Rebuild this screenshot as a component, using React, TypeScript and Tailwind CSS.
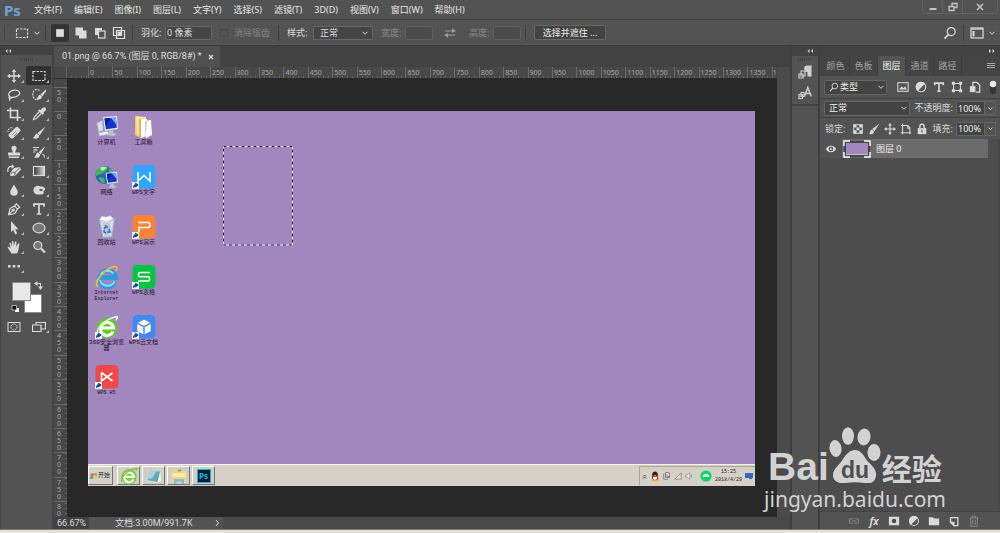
import React, { useState } from 'react';
import clsx from 'clsx';

interface IconProps {
  children: React.ReactNode;
  className?: string;
  box?: number;
}

interface Tool {
  id: string;
  label: string;
  icon: React.ReactNode;
  flyout?: boolean;
}

interface Shortcut {
  label: string;
  latin?: boolean;
  art: React.ReactNode;
}

const MENUS = ['文件(F)', '编辑(E)', '图像(I)', '图层(L)', '文字(Y)', '选择(S)', '滤镜(T)', '3D(D)', '视图(V)', '窗口(W)', '帮助(H)'];

const H_RULER = Array.from({ length: 28 }, (_, i) => i * 50);
const V_RULER = Array.from({ length: 16 }, (_, i) => i * 50);

const Icon = ({ children, className = 'size-3.5', box = 14 }: IconProps) => (
  <svg viewBox={`0 0 ${box} ${box}`} fill="none" stroke="currentColor" strokeWidth="1.2" className={clsx('shrink-0', className)} aria-hidden="true">
    {children}
  </svg>
);

const Chevron = ({ className = 'size-2' }: { className?: string }) => (
  <Icon box={8} className={className}>
    <path d="M1.5 2.8 4 5.3l2.5-2.5" strokeWidth="1" />
  </Icon>
);

const Divider = () => <span className="h-4 w-px shrink-0 bg-[#3c3c3c]" />;

const SearchIcon = ({ className }: { className?: string }) => (
  <Icon className={className}>
    <circle cx="8.2" cy="5.6" r="4" />
    <path d="M5.4 8.6 1.5 12.6" strokeWidth="1.6" />
  </Icon>
);

const TOOLS: Tool[] = [
  {
    id: 'move', label: '移动工具', flyout: true,
    icon: <><path d="M7 2v10M2 7h10" strokeWidth="1.4" /><path d="M7 0 4.8 3h4.4zM7 14l-2.2-3h4.4zM0 7l3-2.2v4.4zM14 7l-3-2.2v4.4z" fill="currentColor" stroke="none" /></>,
  },
  {
    id: 'marquee', label: '矩形选框工具', flyout: true,
    icon: <rect x="1" y="2.5" width="12" height="9" strokeDasharray="2.4 1.2" />,
  },
  {
    id: 'lasso', label: '套索工具', flyout: true,
    icon: <path d="M3.5 9C-.2 7.2 2 2.6 7.4 2.2c5-.3 6.8 3 3.8 5.3-2.2 1.6-5.6 2-7.7 1.5-1.4-.3-2 .8-1 1.4s2.2-.2 1.6-1.4M2.8 10.2c.2 1.2 0 2-.6 2.8" />,
  },
  {
    id: 'quick', label: '快速选择工具', flyout: true,
    icon: <><path d="M7.5 2.4C4-.2.4 2.5.8 6.8c.2 3.3 2.6 5.7 5.2 4.7" strokeDasharray="2 1" /><path d="m13.8 1.4-5.4 5 2 2 4-5.8z" fill="currentColor" stroke="none" /><path d="M8 6.8c-2.2.2-1.6 3-3.8 4.2 2.8 1.4 5.6.2 5.8-2.2z" fill="currentColor" stroke="none" /></>,
  },
  {
    id: 'crop', label: '裁剪工具', flyout: true,
    icon: <path d="M3.5.5v10H14M0 3.5h10.5V14" strokeWidth="1.6" />,
  },
  {
    id: 'eyedropper', label: '吸管工具', flyout: true,
    icon: <><path d="M7.5 4.5 2.2 10 1.4 12.6 4 11.8l5.4-5.3" /><path d="M6 3.6 7.8 2.2l1 .8C11-.4 12.6 0 13.4.8s1.2 2.6-2 4.4l.8 1-1.6 1.6z" fill="currentColor" stroke="none" /></>,
  },
  {
    id: 'heal', label: '污点修复画笔工具', flyout: true,
    icon: <><rect x="1" y="4.200" width="13" height="6" rx="2" transform="rotate(-45 7 7)" fill="currentColor" stroke="none" /><path d="M5.500 8.500 8.500 5.500M7 10l3-3" stroke="#535353" strokeWidth=".9" strokeDasharray="1 .8" /><path d="M1 6c-.4-2.400 2-5 5-4.200" strokeDasharray="1.400 1" /></>,
  },
  {
    id: 'brush', label: '画笔工具', flyout: true,
    icon: <><path d="M13.600.4 5.600 7l2.200 2.200z" fill="currentColor" stroke="none" /><path d="M5.200 7.400c-2.600.2-1.600 3.200-4.400 4.400 2.800 1.800 6.400.7 6.400-2.400z" fill="currentColor" stroke="none" /></>,
  },
  {
    id: 'stamp', label: '仿制图章工具', flyout: true,
    icon: <path d="M5.800 7.500C5.800 5.500 4.400 5 4.400 3.300a2.600 2.600 0 0 1 5.200 0c0 1.700-1.400 2.200-1.400 4.200H12c.8 0 1 .6 1 1.200V10.500H1V8.700c0-.6.2-1.200 1-1.200zM1.800 11.500h10.400V13H1.800z" fill="currentColor" stroke="none" />,
  },
  {
    id: 'history', label: '历史记录画笔工具', flyout: true,
    icon: <><path d="M13.400 1 6.600 7.200l2.200 2zM6 7.600C3.600 7.800 4.600 11 2 12.400c3.200 1.200 6.200 0 6.200-3z" fill="currentColor" stroke="none" /><path d="M1 2.500h6M1.500 4.800h4M1 7h2.500M10.500 9c1.500.6 2 1.600 2 3.500" /></>,
  },
  {
    id: 'eraser', label: '橡皮擦工具', flyout: true,
    icon: <><path d="m7 4 6-1 1 2.500-5.500 6-5 .8L3 9z" fill="currentColor" stroke="none" /><path d="m3.500 9 4.500-.6 5-4.800M8 8.400v3" stroke="#535353" strokeWidth=".8" /><path d="M1 8C0 4 2.500 1.800 5.500 2.500M5 1l1.500 1.600L4.500 4" /></>,
  },
  {
    id: 'gradient', label: '渐变工具', flyout: true,
    icon: <><defs><linearGradient id="tool-grad"><stop offset="0" stopColor="#333" /><stop offset="1" stopColor="#ddd" /></linearGradient></defs><rect x="1.500" y="2.500" width="11" height="9" fill="url(#tool-grad)" /></>,
  },
  {
    id: 'blur', label: '模糊工具', flyout: true,
    icon: <path d="M7 1.500C5.800 4.400 3.200 6.500 3.200 9a3.800 3.800 0 0 0 7.600 0C10.800 6.500 8.200 4.400 7 1.500z" fill="currentColor" stroke="none" />,
  },
  {
    id: 'sponge', label: '海绵工具', flyout: true,
    icon: <><path d="M1.500 6.500C2 3 6 2 9 3.500c3.500 0 4.500 2 4 3.500l-1.500 1c1 3-1 4-3.500 3.500-4 .5-7-1.500-6.500-5z" fill="currentColor" stroke="none" /><ellipse cx="9" cy="7" rx="1.800" ry="1.100" fill="#535353" stroke="none" /></>,
  },
  {
    id: 'pen', label: '钢笔工具', flyout: true,
    icon: <><path d="M1.500 12.800 3 6.500l4.500-2.500 3 3-2.600 4.500zM1.500 12.800 6 8.200M7.500 4l1.800-2.200 3.400 3.400L10.500 7" /><circle cx="6.300" cy="8" r="1" fill="currentColor" /></>,
  },
  {
    id: 'type', label: '横排文字工具', flyout: true,
    icon: <path d="M2 4.800V2.200h10v2.600M7 2.500v9.600M4.800 12h4.400" strokeWidth="1.700" />,
  },
  {
    id: 'path', label: '路径选择工具', flyout: true,
    icon: <path d="M4 0v11l2.300-2 2 4.400 1.900-.9-2-4.200h3.200z" fill="currentColor" stroke="none" />,
  },
  {
    id: 'ellipse', label: '椭圆工具', flyout: true,
    icon: <ellipse cx="7" cy="7" rx="6" ry="4.800" fill="#777" />,
  },
  {
    id: 'hand', label: '抓手工具', flyout: true,
    icon: <path d="M4.500 13.500 1 8.200C0 6.800 1.400 6.300 2.200 7.100l1.500 1.500L2.500 4c-.3-1.400 1-1.700 1.400-.4L5 6.500 4.900 2c0-1.400 1.500-1.400 1.600 0l.4 4.300L8 2c.3-1.300 1.700-1 1.500.4l-.5 4.300L10.800 4c.8-1 2-.5 1.600.6-.9 2.400-.4 6.200-2.400 8.900z" fill="currentColor" stroke="none" />,
  },
  {
    id: 'zoom', label: '缩放工具',
    icon: <><circle cx="5.800" cy="5.500" r="4" fill="#777" /><path d="m9 8.500 4 4" strokeWidth="2.200" /></>,
  },
];

const FlyoutMark = () => (
  <Icon box={3} className="absolute right-0.5 bottom-0.5 size-[3px] text-[#b4b4b4]">
    <path d="M3 0v3H0z" fill="currentColor" stroke="none" />
  </Icon>
);

const ShortcutArrow = () => (
  <g>
    <path d="M0 17h7v7H0z" fill="#f1f3f6" stroke="none" />
    <path d="M1.500 22.800c-.2-2 .7-3 2-3.200v-1.400L6.200 20 3.500 22v-1.200z" fill="#164b91" stroke="#164b91" strokeWidth="1" />
  </g>
);

const AppTile = ({ color, children }: { color: string; children: React.ReactNode }) => (
  <Icon box={24} className="size-6">
    <rect x=".5" y="0" width="23" height="23.500" rx="4.500" fill={color} stroke="none" />
    <g stroke="#fff" strokeWidth="1.600">{children}</g>
    <ShortcutArrow />
  </Icon>
);

const Monitor = () => (
  <g stroke="none">
    <path d="m8 2 14-1 1 13-13 2z" fill="#dce3e9" />
    <path d="m9.500 3.400 11.400-.8.8 10.200L11 14.200z" fill="#1235cb" />
    <path d="m9.500 3.400 6-.4-4.700 8z" fill="#071f91" />
    <path d="m16 2.900 4.900-.3.6 7.200z" fill="#7ca4f5" />
    <path d="m14 15.500 4-.6.6 3 3.400.8-3 2.300-8-1 3-2z" fill="#b9c2cb" />
  </g>
);

const ComputerArt = () => (
  <Icon box={24} className="size-6">
    <path d="m1.500 8 6-3 1 10.500-5 2z" fill="#d4dae0" stroke="#8c96a3" strokeWidth=".6" />
    <path d="m3 18 9-2 3 3-10 2z" fill="#e9edf0" stroke="#98a2ac" strokeWidth=".5" />
    <Monitor />
  </Icon>
);

const FolderArt = () => (
  <Icon box={24} className="size-6">
    <g stroke="none">
      <path d="m3 1 6 2v20l-6-3z" fill="#edc866" />
      <path d="m4 1 10 1v3l-5 18-4-3z" fill="#f7e3a0" />
      <path d="m9 5 6-1v17l-6 2z" fill="#fbfbfa" />
      <path d="m13 6 6-1 1 15-6 3z" fill="#fff" />
      <path d="m15 6-2 .4.600 16" fill="#c8c6bb" />
      <path d="m7 4 2 .6V23l-2-1z" fill="#ddb654" />
    </g>
  </Icon>
);

const NetworkArt = () => (
  <Icon box={24} className="size-6">
    <circle cx="9.500" cy="10" r="9" fill="#2465bd" stroke="none" />
    <path d="M3 4c4-4 8-3 10-1l-3 4-4 2-5 2C0 8 1 6 3 4zM4 12l5 1 1 5c-4 0-6-2-6-6zM14 3c3 1 4 3 4 5l-4-1z" fill="#45b64c" stroke="none" />
    <path d="M5 3c3-2 6-1 7 0L7 6z" fill="#b4edb0" stroke="none" />
    <g transform="translate(4 6) scale(.82)"><Monitor /></g>
  </Icon>
);

const RecycleArt = () => (
  <Icon box={24} className="size-6">
    <path d="m4 5 16-1-3 18-9 1z" fill="#c7d3df" fillOpacity=".85" stroke="#8fa1b5" strokeWidth=".8" />
    <path d="m4 5 3-4 4 1 4-1.500 4 3.500-7 3z" fill="#f4f6f8" stroke="#a5b0bc" strokeWidth=".6" />
    <path d="m7 8 2 13M17 7l-2 14M6 7h12" stroke="#eef3f8" strokeWidth=".8" />
    <path d="m9 14 2-3 2 2M14 14l1 3h-3M11 18l-2-1 0-2" stroke="#2472d4" strokeWidth="1.600" />
  </Icon>
);

const ExplorerArt = () => (
  <Icon box={24} className="size-6">
    <path d="M20 17A8.200 8.200 0 1 1 20.600 12.800H7" stroke="#2b9ce0" strokeWidth="4.600" />
    <path d="M19.500 16.500A7.800 7.800 0 0 1 5 15M5.500 9.500a8.200 8.200 0 0 1 13-1" stroke="#8ce1fa" strokeWidth="1.800" />
    <path d="M3 21.500C-2 19 6 8 15 3c5-2.600 8-1.600 6.500 3" stroke="#f1bd31" strokeWidth="1.700" />
  </Icon>
);

const GreenE = ({ arrow }: { arrow?: boolean }) => (
  <Icon box={24} className="size-6">
    <circle cx="12" cy="13" r="10.200" fill={arrow ? '#66c827' : '#7ccb45'} stroke="none" />
    <path d="M18 16.500a6.500 6.500 0 1 1 .5-3.500H7" stroke={arrow ? '#fff' : '#f2f9ec'} strokeWidth="3" />
    <path d="M2 20C1 13 10 4 22 1.500c1 0 0 2-1 4" stroke={arrow ? '#e6fad6' : '#6fc93a'} strokeWidth="1.500" />
    {arrow && <ShortcutArrow />}
  </Icon>
);

const DESKTOP: Shortcut[][] = [
  [
    { label: '计算机', art: <ComputerArt /> },
    { label: '网络', art: <NetworkArt /> },
    { label: '回收站', art: <RecycleArt /> },
    { label: 'Internet Explorer', latin: true, art: <ExplorerArt /> },
    { label: '360安全浏览器', art: <GreenE arrow /> },
    { label: 'WPS H5', latin: true, art: <AppTile color="#f04848"><path d="M6.500 7.500v8.500l11-8M6.500 7.500l11 8.500" /></AppTile> },
  ],
  [
    { label: '工具箱', art: <FolderArt /> },
    { label: 'WPS文字', art: <AppTile color="#31a5fd"><path d="M6 7v9l6-5.500 6 5.500V7" /></AppTile> },
    { label: 'WPS演示', art: <AppTile color="#fd8337"><path d="M7 17v-4.500h9q2 0 2-2V9.500q0-2-2-2H6" /></AppTile> },
    { label: 'WPS表格', art: <AppTile color="#06c341"><path d="M18 7.500H8q-1.500 0-1.500 1.300v1.400q0 1.500 1.500 1.500h8q1.500 0 1.500 1.400v1.400q0 1.500-1.500 1.500H6" /></AppTile> },
    {
      label: 'WPS云文档',
      art: (
        <AppTile color="#4287f5">
          <path d="m12 4.500 6 3.200-6 3.200-6-3.200zM5.300 9l6 3.200v7l-6-3.200zM18.700 9l-6 3.200v7l6-3.200z" fill="#fff" stroke="none" />
        </AppTile>
      ),
    },
  ],
];

const MenuBar = () => (
  <header className="flex h-5 shrink-0 items-center border-b border-[#454545] pl-1">
    <span className="w-[30px] text-[15px] leading-4 font-bold text-[#6fa3d8]">Ps</span>
    <nav className="flex flex-1 items-center gap-3 text-[9px] leading-5 text-[#e8e8e8]">
      {MENUS.map((menu) => (
        <button key={menu} type="button">{menu}</button>
      ))}
    </nav>
    <div className="mr-0.5 flex h-3.5 self-start rounded-b-sm border border-t-0 border-[#636363] text-[#c4c4c4]">
      <button type="button" aria-label="最小化" className="flex w-5 items-center justify-center border-r border-[#636363]">
        <Icon box={10} className="size-2.5"><path d="M1.500 7h7" strokeWidth="2" /></Icon>
      </button>
      <button type="button" aria-label="还原" className="flex w-5 items-center justify-center border-r border-[#636363]">
        <Icon box={10} className="size-2.5"><path d="M4 4V1.500h5v4H6.500M1 4.500h5v4H1z" strokeWidth="1.300" /></Icon>
      </button>
      <button type="button" aria-label="关闭" className="flex w-[34px] items-center justify-center">
        <Icon box={10} className="size-2.5"><path d="m2 2 6 6M8 2 2 8" strokeWidth="1.600" /></Icon>
      </button>
    </div>
  </header>
);

const OptionsBar = () => {
  const [feather, setFeather] = useState('0 像素');

  return (
    <section className="flex h-[26px] shrink-0 items-center border-b border-[#3c3c3c] text-[9px] text-[#dcdcdc]">
      <span className="mr-2.5 ml-1 h-4 w-px bg-[#454545]" />
      <button type="button" aria-label="工具预设" className="flex items-center gap-0.5">
        <Icon><rect x="1.500" y="3" width="11" height="8.500" strokeDasharray="2.400 1.200" /></Icon>
        <Chevron className="ml-0.5 size-2" />
      </button>
      <span className="ml-1 flex"><Divider /></span>
      <div className="mr-1 ml-[5px] flex items-center">
        <button type="button" aria-label="新选区" className="mr-0.5 flex size-[18px] items-center justify-center rounded-xs bg-[#343434]">
          <Icon className="size-3"><rect x="2.500" y="2.500" width="9" height="9" fill="currentColor" stroke="none" /></Icon>
        </button>
        <button type="button" aria-label="添加到选区" className="flex w-[19px] justify-center">
          <Icon className="size-3.5"><path d="M1.500 1.500H9v3h3.500v8H5V9.500H1.500z" fill="currentColor" stroke="none" /></Icon>
        </button>
        <button type="button" aria-label="从选区减去" className="flex w-[19px] justify-center">
          <Icon className="size-3.5"><path d="M2 2h7v2.500H5V9H2z" fill="currentColor" stroke="none" /><rect x="5.500" y="5" width="6.500" height="7" /></Icon>
        </button>
        <button type="button" aria-label="与选区交叉" className="flex w-[19px] justify-center">
          <Icon className="size-3.5"><path d="M1.500 1.500h8v8h-8zM4.500 4.500h8v8h-8z" /><path d="M5.500 5.500h3.500V9H5.500z" fill="currentColor" stroke="none" /></Icon>
        </button>
      </div>
      <Divider />
      <label htmlFor="feather" className="ml-2 w-6 whitespace-nowrap">羽化:</label>
      <input id="feather" value={feather} onChange={(e) => setFeather(e.target.value)} className="h-3.5 w-[47px] rounded-xs border border-[#666] bg-[#454545] pl-px" />
      <input id="anti-alias" type="checkbox" disabled className="mr-1.5 ml-2 size-2 appearance-none border border-[#474747]" />
      <label htmlFor="anti-alias" className="mr-2 text-[#858585]">消除锯齿</label>
      <Divider />
      <label htmlFor="style" className="ml-2 w-[26px] whitespace-nowrap">样式:</label>
      <div className="relative">
        <select id="style" className="block h-3.5 w-[60px] appearance-none rounded-xs border border-[#666] bg-[#454545] pl-1.5 leading-3">
          <option>正常</option>
        </select>
        <Chevron className="pointer-events-none absolute top-[3px] right-1 size-2" />
      </div>
      <label htmlFor="width" className="ml-2 w-6 whitespace-nowrap text-[#8a8a8a]">宽度:</label>
      <input id="width" disabled className="h-3.5 w-7 rounded-xs border border-[#5f5f5f] bg-[#4b4b4b]" />
      <button type="button" aria-label="交换宽高" className="mx-2.5 text-[#999]">
        <Icon><path d="M2 5h9M12 9H3" /><path d="m9 2 4 3-4 2zM5 7 1 9l4 3z" fill="currentColor" stroke="none" /></Icon>
      </button>
      <label htmlFor="height" className="ml-0.5 w-6 whitespace-nowrap text-[#8a8a8a]">高度:</label>
      <input id="height" disabled className="mr-1 h-3.5 w-7 rounded-xs border border-[#5f5f5f] bg-[#4b4b4b]" />
      <Divider />
      <button type="button" className="ml-2 h-[15px] w-[72px] rounded-xs border border-[#686868] bg-[#434343] leading-3 whitespace-nowrap text-[#ececec]">选择并遮住 ...</button>
      <div className="ml-auto flex items-center gap-1.5 pr-1">
        <button type="button" aria-label="搜索"><SearchIcon /></button>
        <Divider />
        <button type="button" aria-label="工作区" className="flex items-center gap-1">
          <Icon><rect x="1" y="2" width="12" height="10" /><path d="M1 3h12" /><path d="M2.500 5h2v5.500h-2z" fill="currentColor" stroke="none" /></Icon>
          <Chevron />
        </button>
      </div>
    </section>
  );
};

const Grip = () => <span className="block h-[3px] w-3.5 bg-[repeating-linear-gradient(90deg,#444_0_1px,#535353_1px_2px)]" />;

const Toolbar = () => {
  const [active, setActive] = useState('marquee');

  return (
    <aside className="flex w-[54px] shrink-0 flex-col border-r-2 border-l border-[#424242] text-[#dadada]">
      <button type="button" aria-label="折叠工具栏" className="h-[9px] bg-[#424242] pl-[3px] text-left text-[#cfcfcf]">
        <Icon box={8} className="size-2"><path d="M3.500 2 1.500 4l2 2zM7 2 5 4l2 2z" fill="currentColor" stroke="none" /></Icon>
      </button>
      <div className="flex h-[11px] items-start justify-center pt-[3px]"><Grip /></div>
      <div className="grid grid-cols-2 pr-px">
        {TOOLS.map((tool) => (
          <button
            key={tool.id}
            type="button"
            aria-label={tool.label}
            onClick={() => setActive(tool.id)}
            className={clsx('relative flex h-[19px] items-center justify-center rounded-xs', active === tool.id && 'bg-[#323232]')}
          >
            <Icon>{tool.icon}</Icon>
            {tool.flyout && <FlyoutMark />}
          </button>
        ))}
        <button type="button" aria-label="编辑工具栏" className="relative flex h-[19px] items-center justify-center">
          <Icon><path d="M1 6h2.600v2.600H1zM5.700 6h2.600v2.600H5.700zM10.400 6H13v2.600h-2.600z" fill="currentColor" stroke="none" /></Icon>
          <FlyoutMark />
        </button>
      </div>
      <div className="flex h-10 justify-center pt-1">
        <Icon box={36} className="size-9">
          <rect x="15.500" y="15.500" width="17" height="18" fill="#fff" stroke="#8a8a8a" strokeWidth="1" />
          <rect x="3.500" y="3.500" width="18" height="18" fill="#e8e8e8" stroke="#8a8a8a" strokeWidth="1" />
          <path d="M27 4.500h4.500V8" strokeWidth="1.100" />
          <path d="M28.500 2v5l-3.500-2.500zM29 7.500h5l-2.500 3.500z" fill="currentColor" stroke="none" />
          <path d="M6 29h4v4H6z" fill="#fff" stroke="none" />
          <path d="M3 26.500h4.500V31H3z" fill="#111" stroke="#ccc" strokeWidth=".8" />
        </Icon>
      </div>
      <div className="mt-1 grid grid-cols-2 pr-px">
        <button type="button" aria-label="快速蒙版" className="flex h-4 items-center justify-center">
          <Icon><rect x="1" y="2.500" width="12" height="9" strokeWidth="1" /><circle cx="7" cy="7" r="3" strokeWidth="1" strokeDasharray="1.400 .6" /></Icon>
        </button>
        <button type="button" aria-label="屏幕模式" className="relative flex h-4 items-center justify-center">
          <Icon><path d="M4 5V2.500h9.500v6.500H9M.5 5H9v6.500H.5z" /></Icon>
          <FlyoutMark />
        </button>
      </div>
    </aside>
  );
};

const Selection = () => (
  <svg className="absolute top-[35px] left-[135px] h-[100px] w-[71px]" viewBox="0 0 71 100" fill="none" aria-hidden="true">
    <rect x=".5" y=".5" width="69" height="98.500" stroke="#eee5f4" />
    <rect x=".5" y=".5" width="69" height="98.500" stroke="#30223c" strokeDasharray="3 3" />
  </svg>
);

const Taskbar = () => {
  const slot = 'flex h-[19px] w-[23px] items-center justify-center border border-t-white border-r-[#77736c] border-b-[#77736c] border-l-white bg-[#d2cec5]';

  return (
    <footer className="mt-auto flex h-[22px] items-center border-t border-[#f4f2ec] bg-[#d5d1c8] text-[#222]">
      <button type="button" className="mr-1 flex h-[19px] w-[25px] items-center border border-t-white border-r-[#77736c] border-b-[#77736c] border-l-white pl-px text-[6px] whitespace-nowrap">
        <Icon box={9} className="size-2">
          <g stroke="none">
            <path d="m1 2 3-1v3L.5 5z" fill="#ea5631" /><path d="m5 1 3 .5-.5 3L4.700 4z" fill="#76b942" />
            <path d="m.5 5.500 3-1V7L0 8z" fill="#3285d4" /><path d="m4.500 4.800 3 .5-.5 2.700-3-.8z" fill="#fac33d" />
          </g>
        </Icon>
        开始
      </button>
      <div className="flex gap-0.5">
        <button type="button" aria-label="360安全浏览器" className={slot}><span className="scale-75"><GreenE /></span></button>
        <button type="button" aria-label="记事本" className={slot}>
          <Icon box={18} className="size-4"><path d="m5 3 11 1-3 12-11-2z" fill="#65aab9" stroke="none" /><path d="m5 3 7 .5-5 8-4.500 1z" fill="#a8d5df" stroke="none" /><path d="m16 4 1 11-4 1zM2 14l11 2v1L2 15z" fill="#f3f5f5" stroke="none" /></Icon>
        </button>
        <button type="button" aria-label="资源管理器" className={slot}>
          <Icon box={18} className="size-4.5"><path d="M2 3h5l1 1.500h8V16H2z" fill="#f3d576" stroke="none" /><path d="M2 6h14v4H2z" fill="#fbeaaa" stroke="none" /><path d="M4 17v-5h10v5h-2.500v-2.500h-5V17z" fill="#7bbce8" stroke="none" /><path d="M8 3.500h3" stroke="#3ba445" /></Icon>
        </button>
        <button type="button" aria-label="Photoshop" className={slot}>
          <span className="flex size-3.5 items-center justify-center border border-[#10b2e8] bg-[#06202e] text-[8px] leading-3 font-bold text-[#14bdf3]">Ps</span>
        </button>
      </div>
      <div className="ml-auto flex h-[19px] items-center gap-[3px] border-t border-l border-[#aaa69d] pl-0.5">
        <Icon box={5} className="size-[5px]"><path d="m1 2.500 1.500-1.500L4 2.500M1 4.500 2.500 3 4 4.500" strokeWidth=".8" /></Icon>
        <Icon box={10} className="size-2.5"><g stroke="none"><ellipse cx="5" cy="5" rx="3" ry="4.500" fill="#222" /><ellipse cx="5" cy="6.500" rx="2" ry="2.500" fill="#fff" /><path d="M2 4.500h6v1.500H2zM7 6l2 2-2 1z" fill="#e33422" /><path d="M2 8.500h6V10H2z" fill="#f5a623" /></g></Icon>
        <Icon box={10} className="size-2 text-[#777]"><path d="M1 2v7h5M3 1h5v6H3zM5 3v3h3" fill="#eee" /></Icon>
        <Icon box={10} className="size-2 text-[#8a8a8a]"><path d="M1 9 9 1v8z" fill="#ddd" strokeWidth="1" /></Icon>
        <Icon box={10} className="size-2 text-[#888]"><path d="M1 3.500h2L6 1v8L3 6.500H1zM8 3v4" fill="#f4f4f4" strokeWidth=".9" /></Icon>
        <Icon box={12} className="ml-1 size-3"><circle cx="6" cy="6" r="5.600" fill="#14d16c" stroke="none" /><path d="M2.500 7c0-4.500 7-4.500 7 0zM4 6.500h1M7 6.500h1" fill="#d5f8e4" stroke="none" /></Icon>
        <div className="flex flex-col items-center font-['Liberation_Mono',monospace] text-[5px] leading-2">
          <span>15:25</span>
          <span>2018/4/29</span>
        </div>
        <Icon box={8} className="mr-0.5 size-2"><path d="M0 1h8v5H0z" fill="#2c6bc0" stroke="none" /><path d="M4 6.500h3" stroke="#666" /></Icon>
      </div>
    </footer>
  );
};

const Desktop = () => (
  <div className="relative flex flex-1 flex-col bg-[#a187bd]">
    <div className="flex pt-1 text-[#1c1028]">
      {DESKTOP.map((column, index) => (
        <ul key={index} className="w-[37px]">
          {column.map((item) => (
            <li key={item.label} className="flex h-[50px] flex-col items-center text-center">
              {item.art}
              <span
                className={clsx(
                  'mt-px leading-[6px]',
                  item.latin ? "font-['Liberation_Mono',monospace] text-[5px]" : "font-['Liberation_Mono','Noto_Sans_CJK_SC',monospace] text-[6px]"
                )}
              >
                {item.label}
              </span>
            </li>
          ))}
        </ul>
      ))}
    </div>
    <Selection />
    <Taskbar />
  </div>
);

const HRuler = () => (
  <div className="flex h-3 shrink-0 items-stretch overflow-hidden border-b border-[#2b2b2b] bg-[#484848] text-[7px] leading-3 text-[#a9a9a9]">
    <span className="w-[13px] shrink-0 border-r border-[#636363]" />
    <span className="w-[21px] shrink-0 bg-[repeating-linear-gradient(90deg,transparent_0_4px,#666_4px_5px)] bg-[length:100%_2px] bg-bottom bg-no-repeat" />
    {H_RULER.map((mark) => (
      <span key={mark} className="min-w-0 flex-1 border-l border-[#6b6b6b] bg-[repeating-linear-gradient(90deg,transparent_0_4px,#666_4px_5px)] bg-[length:100%_2px] bg-bottom bg-no-repeat pl-px">
        {mark}
      </span>
    ))}
    <span className="w-[5px] shrink-0 border-l border-[#6b6b6b]">1</span>
  </div>
);

const VMark = ({ value }: { value: number }) => (
  <span className="flex min-h-0 flex-1 flex-col border-t border-[#6b6b6b] pt-px pl-[3px]">
    {String(value).split('').map((digit, i) => (
      <span key={i} className="h-[7px] shrink-0">{digit}</span>
    ))}
  </span>
);

const VRuler = () => (
  <div className="flex w-[13px] shrink-0 flex-col bg-[#484848] bg-[repeating-linear-gradient(180deg,transparent_0_4px,#666_4px_5px)] bg-[length:2px_100%] bg-right bg-no-repeat text-[7px] leading-[7px] text-[#a9a9a9]">
    <span className="h-2 shrink-0" />
    <div className="flex h-6 shrink-0"><VMark value={50} /></div>
    {V_RULER.map((mark) => <VMark key={mark} value={mark} />)}
    <div className="flex h-4 shrink-0"><VMark value={80} /></div>
  </div>
);

const DocumentWindow = () => (
  <main className="flex min-w-0 flex-1 flex-col">
    <div className="flex h-[21px] shrink-0 bg-[#424242]">
      <div className="flex items-center gap-1.5 bg-[#505050] pr-1.5 pl-2 font-['Roboto','Noto_Sans_CJK_SC',sans-serif] text-[9px] text-[#dedede]">
        <span>01.png @ 66.7% (图层 0, RGB/8#) *</span>
        <button type="button" aria-label="关闭文档">
          <Icon box={6} className="size-1.5"><path d="m1 1 4 4M5 1 1 5" /></Icon>
        </button>
      </div>
    </div>
    <div className="flex min-h-0 flex-1">
      <div className="flex min-w-0 flex-1 flex-col">
        <HRuler />
        <div className="flex min-h-0 flex-1">
          <VRuler />
          <div className="flex flex-1 bg-[#282828] pt-8 pr-[22px] pb-[31px] pl-[21px]">
            <Desktop />
          </div>
        </div>
      </div>
      <div className="w-[13px] shrink-0 bg-[#4b4b4b]" />
    </div>
    <div className="flex h-3 shrink-0 items-center bg-[#494949] font-['Roboto','Noto_Sans_CJK_SC',sans-serif] text-[9px] leading-3 text-[#dcdcdc]">
      <span className="w-[35px] shrink-0 bg-[#414141] pl-[3px]">66.67%</span>
      <div className="flex w-[134px] items-center justify-between bg-[#535353] pr-0.5 pl-[26px]">
        <span>文档:3.00M/991.7K</span>
        <Icon box={8} className="size-2"><path d="m3 1 2.500 3L3 7" strokeWidth="1" /></Icon>
      </div>
    </div>
  </main>
);

const CollapsedPanels = () => (
  <aside className="flex w-[30px] shrink-0 flex-col border-x-2 border-[#3e3e3e] text-[#cfcfcf]">
    <button type="button" aria-label="展开面板" className="flex h-2.5 shrink-0 justify-end bg-[#424242] pt-px pr-1">
      <Icon box={8} className="size-2"><path d="M3.500 2 1.500 4l2 2zM7 2 5 4l2 2z" fill="currentColor" stroke="none" /></Icon>
    </button>
    <div className="flex flex-col items-center gap-1 border-b-2 border-[#424242] pt-0.5 pb-[3px]">
      <Grip />
      <button type="button" aria-label="段落" className="flex h-4">
        <Icon><path d="M13 1H9.500a2.700 2.700 0 0 0 0 5.400H10V11h1V2.500h.8V11h1.200z" fill="currentColor" /><path d="M3 6h4v5H3zM1 9h4v4H1z" fill="#535353" /></Icon>
      </button>
      <button type="button" aria-label="字符" className="flex h-4 items-center">
        <Icon><path d="m6.500 10.500 3.300-9 3.500 9M7.500 7.500h4.800" strokeWidth="1.500" /><path d="M3 6.500h3v4H3zM1 8.500h3.500v4H1z" fill="#535353" /></Icon>
      </button>
    </div>
  </aside>
);

const PercentField = ({ id, label }: { id: string; label: string }) => (
  <div className="ml-auto flex items-center">
    <label htmlFor={id} className="mr-[3px] whitespace-nowrap">{label}</label>
    <input id={id} defaultValue="100%" className="h-3.5 w-[29px] rounded-l-xs border border-[#646464] bg-[#434343] pl-px text-[9px] text-[#ededed]" />
    <button type="button" aria-label={`${label}滑块`} className="flex h-3.5 w-[11px] items-center justify-center border border-l-0 border-[#646464]">
      <Chevron className="size-[7px]" />
    </button>
  </div>
);

const PanelIcon = ({ label, children, dim }: { label: string; children: React.ReactNode; dim?: boolean }) => (
  <button type="button" aria-label={label} className={dim ? 'text-[#858585]' : 'text-[#dadada]'}>
    <Icon className="size-3">{children}</Icon>
  </button>
);

const LayersPanel = () => {
  const [tab, setTab] = useState('图层');

  return (
    <aside className="flex w-[180px] shrink-0 flex-col bg-[#535353] text-[9px] text-[#d8d8d8]">
      <button type="button" aria-label="折叠面板" className="flex h-2.5 shrink-0 justify-end bg-[#424242] pt-px pr-1">
        <Icon box={8} className="size-2"><path d="m1 2 2 2-2 2zM4.500 2l2 2-2 2z" fill="currentColor" stroke="none" /></Icon>
      </button>
      <div role="tablist" className="flex h-5 shrink-0 bg-[#444] pl-0.5">
        {['颜色', '色板', '图层', '通道', '路径'].map((name) => (
          <button
            key={name}
            type="button"
            role="tab"
            aria-selected={tab === name}
            onClick={() => setTab(name)}
            className={clsx('w-7 border-r border-[#3c3c3c]', tab === name ? 'bg-[#535353] text-[#f4f4f4]' : 'text-[#a2a2a2]')}
          >
            {name}
          </button>
        ))}
        <button type="button" aria-label="面板菜单" className="ml-auto pr-[5px]">
          <Icon box={8} className="size-2"><path d="M0 1.500h8M0 3.500h8M0 5.500h8" strokeWidth="1" stroke="#aaa" /></Icon>
        </button>
      </div>
      <div className="flex h-[23px] shrink-0 items-center border-b border-[#424242] pl-1">
        <div className="relative mr-2.5 flex h-[15px] w-[63px] items-center rounded-xs border border-[#646464] bg-[#434343] pl-1">
          <SearchIcon className="size-2.5" />
          <select aria-label="滤镜类型" className="ml-px flex-1 appearance-none leading-3 text-[#ededed]">
            <option>类型</option>
          </select>
          <Chevron className="pointer-events-none absolute right-px size-2" />
        </div>
        <div className="flex flex-1 items-center gap-1.5">
          <PanelIcon label="像素图层"><rect x="1" y="2" width="12" height="10" /><path d="m2.500 10 3-4 2 2.500L9.500 6l2 4z" fill="currentColor" stroke="none" /></PanelIcon>
          <PanelIcon label="调整图层"><circle cx="7" cy="7" r="5.500" /><path d="M11 3A5.500 5.500 0 0 0 3 11z" fill="currentColor" /></PanelIcon>
          <PanelIcon label="文字图层"><path d="M2 5V2.500h10V5M7 2.500v9.500M5 12h4" strokeWidth="1.900" /></PanelIcon>
          <PanelIcon label="形状图层"><path d="M3 3h8v8H3z" /><path d="M1 1h3.500v3.500H1zM9.500 1H13v3.500H9.500zM1 9.500h3.500V13H1zM9.500 9.500H13V13H9.500z" fill="currentColor" stroke="none" /></PanelIcon>
          <PanelIcon label="智能对象"><path d="M4.500 6V1.500H9L12.500 5v8H8" strokeWidth="1.500" /><path d="M1 6h6.500v7H1z" fill="currentColor" stroke="none" /></PanelIcon>
        </div>
        <button type="button" aria-label="图层过滤开关" className="pr-[3px]">
          <Icon box={8} className="h-3.5 w-2"><rect x="1" y="-2" width="6" height="13" rx="3" fill="#363636" stroke="none" /><circle cx="4" cy="1" r="3.200" fill="#e8e8e8" stroke="none" /></Icon>
        </button>
      </div>
      <div className="flex h-[19px] shrink-0 items-center border-b border-[#424242] pr-1 pl-1">
        <div className="relative">
          <select aria-label="混合模式" className="block h-[15px] w-[86px] appearance-none rounded-xs border border-[#646464] bg-[#434343] pl-1 leading-3 text-[#ededed]">
            <option>正常</option>
          </select>
          <Chevron className="pointer-events-none absolute top-[3px] right-0.5 size-2" />
        </div>
        <PercentField id="opacity" label="不透明度:" />
      </div>
      <div className="flex h-[21px] shrink-0 items-center pr-1 pl-[5px]">
        <span className="mr-[7px]">锁定:</span>
        <div className="flex gap-1">
          <PanelIcon label="锁定透明像素"><rect x="2" y="2" width="10" height="10" /><path d="M2 2h3.300v3.300H2zM8.600 2H12v3.300H8.600zM5.300 5.300h3.300v3.300H5.300zM2 8.600h3.300V12H2zM8.600 8.600H12V12H8.600z" fill="currentColor" stroke="none" /></PanelIcon>
          <PanelIcon label="锁定图像像素"><path d="m13.500.5-8.500 6.500 2.500 2.500zM4.600 7.500C2 7.500 3.500 11 1 12.500c3 1.200 6 .2 6-2.700z" fill="currentColor" stroke="none" /></PanelIcon>
          <PanelIcon label="锁定位置"><path d="M7 2v10M2 7h10" strokeWidth="1.400" /><path d="M7 0 4.800 3h4.400zM7 14l-2.200-3h4.400zM0 7l3-2.200v4.400zM14 7l-3-2.200v4.400z" fill="currentColor" stroke="none" /></PanelIcon>
          <PanelIcon label="锁定画板"><path d="M3 1v12M1 3h8l2.500 2.500V13M1 11.500h12M9 3v3h3" /></PanelIcon>
          <PanelIcon label="锁定全部"><path d="M2 6h10v7H2z" fill="currentColor" stroke="none" /><path d="M4.500 6V4a2.500 2.500 0 0 1 5 0v2" strokeWidth="1.600" /><path d="M7 8v3" stroke="#444" /></PanelIcon>
        </div>
        <PercentField id="fill" label="填充:" />
      </div>
      <ul className="flex-1 border-r-2 border-[#484848] bg-[#4d4d4d]">
        <li className="mr-2.5 flex h-[19px] items-center bg-[#6b6b6b]">
          <button type="button" aria-label="图层可见性" className="flex h-full w-[22px] items-center justify-center bg-[#535353]">
            <Icon className="size-3"><path d="M1 7c3-5 9-5 12 0-3 5-9 5-12 0z" fill="currentColor" stroke="none" /><circle cx="7" cy="7" r="2.600" fill="#535353" stroke="none" /><circle cx="7" cy="7" r="1.200" fill="currentColor" stroke="none" /></Icon>
          </button>
          <svg viewBox="0 0 28 18" className="ml-px h-[18px] w-7" fill="none" aria-hidden="true">
            <rect x="1" y="1" width="26" height="16" fill="#444" />
            <path d="M1 6V1h6M21 1h6v5M27 12v5h-6M7 17H1v-5" stroke="#fff" strokeWidth="1.400" />
            <rect x="3" y="3" width="22" height="12" fill="#a187bd" />
            <path d="M3.500 4v8M5 4v6" stroke="#6f9dca" strokeWidth=".8" strokeDasharray="1 1" />
            <path d="M3 14.600h22" stroke="#d5d1c8" strokeWidth=".8" />
          </svg>
          <span className="ml-[5px] text-[#ededed]">图层 0</span>
        </li>
      </ul>
      <div className="flex h-[18px] shrink-0 items-center justify-end gap-2 border-t border-[#424242] pr-5">
        <PanelIcon label="链接图层" dim><path d="M6 4.500H4a2.500 2.500 0 0 0 0 5h2M8 4.500h2a2.500 2.500 0 0 1 0 5H8M4.500 7h5" /></PanelIcon>
        <button type="button" aria-label="图层样式" className="w-3 text-[10px] leading-3 font-bold italic">fx</button>
        <PanelIcon label="图层蒙版"><path d="M1 2h12v10H1z" fill="currentColor" stroke="none" /><circle cx="7" cy="7" r="2.600" fill="#4a4a4a" stroke="none" /></PanelIcon>
        <PanelIcon label="调整图层"><circle cx="7" cy="7" r="5.200" /><path d="M10.700 3.300A5.200 5.200 0 0 0 3.300 10.700z" fill="currentColor" /></PanelIcon>
        <PanelIcon label="新建组"><path d="M1 2.500h5l1 1.500h6v8H1z" fill="currentColor" stroke="none" /></PanelIcon>
        <PanelIcon label="新建图层"><path d="M3 3h8.500v9.500H7L3 8.500z" strokeWidth="1.500" /><path d="M3 8.500h4v4z" fill="currentColor" /></PanelIcon>
        <PanelIcon label="删除图层" dim><path d="M2 3.500h10M5 3V1.500h4V3M3 4l.5 9h7l.5-9M5.500 5.500v6M8.500 5.500v6" /></PanelIcon>
      </div>
    </aside>
  );
};

const Watermark = () => (
  <div className="pointer-events-none absolute right-[54px] bottom-[22px] flex flex-col text-[#d2d2d2]">
    <div className="flex h-[60px] items-end pl-1">
      <span className="font-['Liberation_Sans',sans-serif] text-[39px] leading-10 font-bold">Bai</span>
      <svg viewBox="0 0 52 56" className="mb-1 h-14 w-[52px]" fill="currentColor" aria-hidden="true">
        <ellipse cx="6.500" cy="21.500" rx="6" ry="8.500" transform="rotate(-8 6.500 21.500)" />
        <ellipse cx="19" cy="9" rx="6" ry="8.700" />
        <ellipse cx="35" cy="10" rx="6.500" ry="8.500" transform="rotate(10 35 10)" />
        <ellipse cx="45" cy="25.500" rx="6.500" ry="8.500" />
        <path d="M26 23c5 0 8 4 11 9 4 6 11 9 10 17-1 7-7 8-12 7-6-1-12-1-18 0-6 1-13-1-13-8 0-7 7-10 10-16 3-5 7-9 12-9z" />
        <text x="12" y="51" fill="#4e4e4e" fontFamily="Liberation Sans, sans-serif" fontSize="23" fontWeight="700">du</text>
      </svg>
      <span className="ml-px font-['Noto_Sans_CJK_SC',sans-serif] text-[30px] leading-10 font-bold">经验</span>
    </div>
    <span className="text-[21px] leading-6">jingyan.baidu.com</span>
  </div>
);

export default function App() {
  return (
    <div className="relative flex h-screen min-h-[400px] flex-col overflow-hidden bg-[#535353] font-['Noto_Sans','Noto_Sans_CJK_SC',sans-serif]">
      <MenuBar />
      <OptionsBar />
      <div className="flex min-h-0 flex-1">
        <Toolbar />
        <DocumentWindow />
        <CollapsedPanels />
        <LayersPanel />
      </div>
      <div className="h-1 shrink-0 border-t border-[#777] bg-[#e4e1da]" />
      <Watermark />
    </div>
  );
}
